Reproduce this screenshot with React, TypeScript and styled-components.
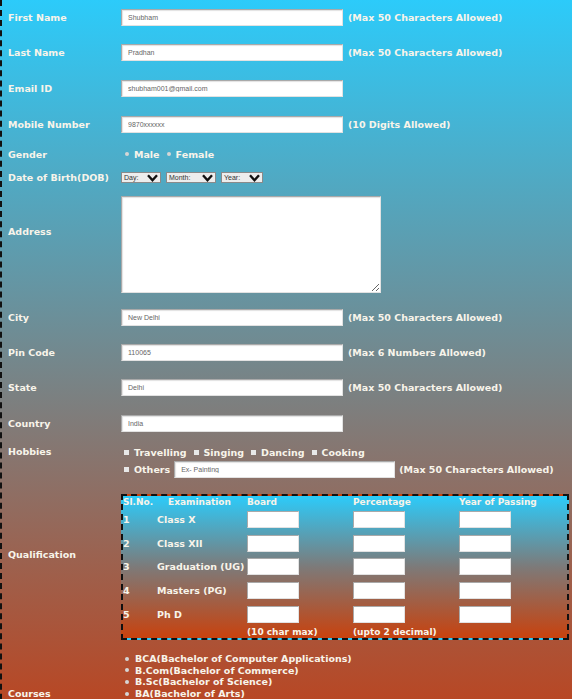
import { Fragment } from "react";
import styled, { createGlobalStyle } from "styled-components";

const GlobalStyle = createGlobalStyle`
    body{
        margin: 0;
        background: #c43c12;
        font-family: "DejaVu Sans", Verdana, sans-serif;
    }
`

const FormTable = styled.div`
    border-left: 2px dashed #111;
    padding-left: 6px;
    background: linear-gradient(180deg, #2ccbfa 0px, #c43c12 760px);
    min-height: 760px;
    color: #f8f4ea;
    font-weight: bold;
    font-size: 9.5px;
`

const Row = styled.div<{ $h?: number; $top?: boolean; $pad?: number }>`
    display: flex;
    align-items: ${p => (p.$top ? "flex-start" : "center")};
    height: ${p => (p.$h ? p.$h + "px" : "auto")};
    box-sizing: border-box;
    padding: ${p => p.$pad ?? 0}px 0;
`

const Label = styled.div<{ $lift?: number; $lh?: number }>`
    width: 113px;
    flex: none;
    margin-bottom: ${p => (p.$lift ?? 0) * 2}px;
    line-height: ${p => (p.$lh ? p.$lh + "px" : "normal")};
`

const Cell = styled.div<{ $gap?: number }>`
    display: flex;
    align-items: center;
    gap: ${p => p.$gap ?? 5}px;
`

const TextBox = styled.input<{ $w?: number }>`
    width: ${p => p.$w ?? 222}px;
    height: 17px;
    box-sizing: border-box;
    border: 1px solid #a9a9a9;
    border-bottom-color: #e2e2e2;
    border-right-color: #e2e2e2;
    box-shadow: inset 1px 1px 1px rgba(0, 0, 0, 0.12);
    background: #fff;
    padding: 0 6px;
    font-family: "Liberation Sans", Arial, sans-serif;
    font-size: 7px;
    color: #666;
    outline: none;
`

const Hint = styled.span`
    white-space: nowrap;
`

const Dot = styled.span`
    width: 4px;
    height: 4px;
    border-radius: 50%;
    background: #d6d6d6;
    margin: 0 2px 0 4px;
`

const Square = styled.span`
    width: 5px;
    height: 5px;
    background: #e8e8e8;
    margin: 0 1px 0 3px;
`

const SelectBox = styled.div<{ $w: number }>`
    width: ${p => p.$w}px;
    height: 11px;
    box-sizing: border-box;
    border: 1px solid #8a8a8a;
    background: #ededed;
    display: flex;
    align-items: center;
    justify-content: space-between;
    padding: 0 2px;
    color: #333;
    font-family: "Liberation Sans", Arial, sans-serif;
    font-weight: normal;
    font-size: 7px;

    svg{
        width: 11px;
        height: 8px;
    }
`

const Address = styled.textarea`
    width: 260px;
    height: 97px;
    box-sizing: border-box;
    border: 1px solid #a9a9a9;
    border-bottom-color: #e2e2e2;
    border-right-color: #e2e2e2;
    box-shadow: inset 1px 1px 1px rgba(0, 0, 0, 0.12);
    background: #fff;
    outline: none;
`

const HobbyList = styled.div`
    display: flex;
    flex-direction: column;
    gap: 3px;
`

const HobbyLine = styled.div`
    display: flex;
    align-items: center;
    gap: 4px;
    height: 14px;
`

const Qual = styled.div`
    width: 448px;
    box-sizing: border-box;
    border: 2px dashed #111;
    background: linear-gradient(180deg, #2ccbfa 0%, #7d7a79 50%, #c8420e 100%);
    display: grid;
    grid-template-columns: 34px 90px 106px 106px 108px;
    grid-template-rows: 12px repeat(5, 23.6px) 12px;
    align-items: center;
`

const Head = styled.div<{ $indent?: number }>`
    font-size: 9px;
    padding-left: ${p => p.$indent ?? 0}px;
    white-space: nowrap;
`

const SmallBox = styled.input`
    width: 52px;
    height: 17px;
    box-sizing: border-box;
    border: 1px solid #a9a9a9;
    border-bottom-color: #e2e2e2;
    border-right-color: #e2e2e2;
    background: #fff;
    outline: none;
`

const CourseList = styled.ul`
    list-style: none;
    margin: 0;
    padding: 0;
    display: flex;
    flex-direction: column;

    li{
        display: flex;
        align-items: center;
        height: 11.6px;
        gap: 4px;
        white-space: nowrap;
    }
`

const Chevron = () => (
    <svg viewBox="0 0 11 8">
        <path d="M1 1.3 L5.5 6.2 L10 1.3" fill="none" stroke="#111" strokeWidth="2.4" />
    </svg>
)

const textRows = [
    { label: "First Name", value: "Shubham", hint: "(Max 50 Characters Allowed)", h: 35 },
    { label: "Last Name", value: "Pradhan", hint: "(Max 50 Characters Allowed)", h: 35 },
    { label: "Email ID", value: "shubham001@gmail.com", hint: "", h: 36 },
    { label: "Mobile Number", value: "9870xxxxxx", hint: "(10 Digits Allowed)", h: 36 },
]

const placeRows = [
    { label: "City", value: "New Delhi", hint: "(Max 50 Characters Allowed)", h: 36 },
    { label: "Pin Code", value: "110065", hint: "(Max 6 Numbers Allowed)", h: 35 },
    { label: "State", value: "Delhi", hint: "(Max 50 Characters Allowed)", h: 35 },
    { label: "Country", value: "India", hint: "", h: 36 },
]

const exams = ["Class X", "Class XII", "Graduation (UG)", "Masters (PG)", "Ph D"]

const courses = [
    "BCA(Bachelor of Computer Applications)",
    "B.Com(Bachelor of Commerce)",
    "B.Sc(Bachelor of Science)",
    "BA(Bachelor of Arts)",
    "MCA(Master of Computer Applications)",
    "M.Com(Master of Commerce)",
    "M.Sc(Master of Science)",
]

export default function App() {
    return (
        <>
            <GlobalStyle />
            <FormTable>
                {textRows.map(r => (
                    <Row key={r.label} $h={r.h}>
                        <Label>{r.label}</Label>
                        <Cell>
                            <TextBox defaultValue={r.value} />
                            {r.hint && <Hint>{r.hint}</Hint>}
                        </Cell>
                    </Row>
                ))}

                <Row $h={24}>
                    <Label>Gender</Label>
                    <Cell $gap={3}>
                        <Dot /> Male <Dot /> Female
                    </Cell>
                </Row>

                <Row $h={23}>
                    <Label>Date of Birth(DOB)</Label>
                    <Cell>
                        <SelectBox $w={40}>Day: <Chevron /></SelectBox>
                        <SelectBox $w={50}>Month: <Chevron /></SelectBox>
                        <SelectBox $w={42}>Year: <Chevron /></SelectBox>
                    </Cell>
                </Row>

                <Row $h={110}>
                    <Label $lift={13}>Address</Label>
                    <Address />
                </Row>

                {placeRows.map(r => (
                    <Row key={r.label} $h={r.h}>
                        <Label>{r.label}</Label>
                        <Cell>
                            <TextBox defaultValue={r.value} />
                            {r.hint && <Hint>{r.hint}</Hint>}
                        </Cell>
                    </Row>
                ))}

                <Row $top $pad={4} $h={43}>
                    <Label $lh={14}>Hobbies</Label>
                    <HobbyList>
                        <HobbyLine>
                            <Square /> Travelling <Square /> Singing <Square /> Dancing <Square /> Cooking
                        </HobbyLine>
                        <HobbyLine>
                            <Square /> Others
                            <TextBox $w={221} defaultValue="Ex- Painting" />
                            <Hint>(Max 50 Characters Allowed)</Hint>
                        </HobbyLine>
                    </HobbyList>
                </Row>

                <Row $pad={10}>
                    <Label $lift={12}>Qualification</Label>
                    <Qual>
                        <Head>Sl.No.</Head>
                        <Head $indent={11}>Examination</Head>
                        <Head>Board</Head>
                        <Head>Percentage</Head>
                        <Head>Year of Passing</Head>
                        {exams.map((e, i) => (
                            <Fragment key={e}>
                                <div>{i + 1}</div>
                                <div>{e}</div>
                                <SmallBox />
                                <SmallBox />
                                <SmallBox />
                            </Fragment>
                        ))}
                        <div />
                        <div />
                        <Head>(10 char max)</Head>
                        <Head>(upto 2 decimal)</Head>
                        <div />
                    </Qual>
                </Row>

                <Row $pad={3}>
                    <Label>Courses</Label>
                    <CourseList>
                        {courses.map(c => (
                            <li key={c}>
                                <Dot />
                                {c}
                            </li>
                        ))}
                    </CourseList>
                </Row>
            </FormTable>
        </>
    )
}
